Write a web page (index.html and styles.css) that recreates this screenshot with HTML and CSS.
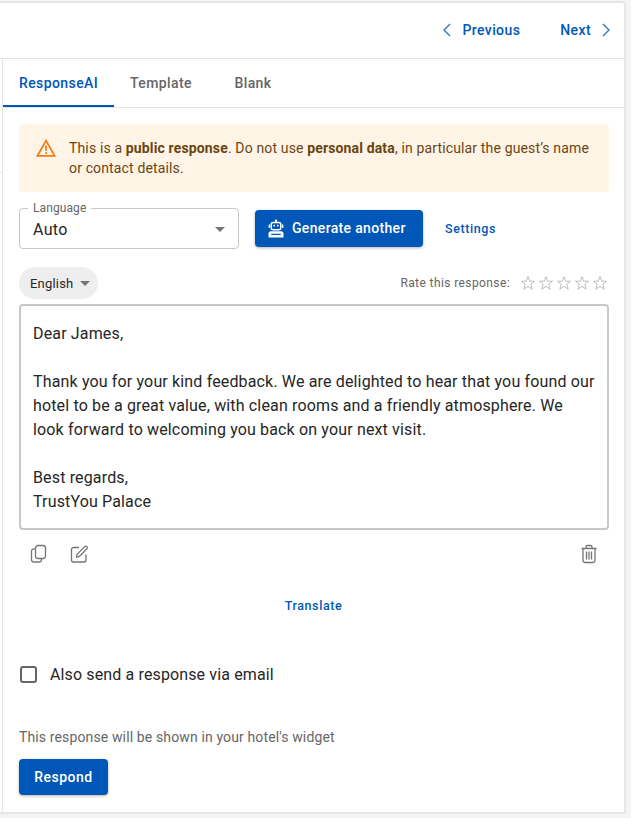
FILE: index.html
```html
<!DOCTYPE html>
<html lang="en">
<head>
<meta charset="utf-8">
<title>Respond</title>
<link rel="stylesheet" href="styles.css">
</head>
<body>
<main class="panel">
  <header class="pager">
    <a class="pager-link prev">
      <svg class="chev" viewBox="0 0 10 16"><path d="M8 2 2 8l6 6"/></svg>
      <span>Previous</span>
    </a>
    <a class="pager-link next">
      <span>Next</span>
      <svg class="chev" viewBox="0 0 10 16"><path d="m2 2 6 6-6 6"/></svg>
    </a>
  </header>
  <div class="body">
    <nav class="tabs">
      <a class="tab active">ResponseAI</a>
      <a class="tab">Template</a>
      <a class="tab">Blank</a>
    </nav>
    <section class="content">
      <div class="alert">
        <svg class="alert-icon" viewBox="0 0 20 18"><path class="alert-tri" d="M10 1.600 1.400 16.800h17.200Z"/><path class="alert-mark" d="M10 6.600v5.200M10 13.200v1.700"/></svg>
        <p>This is a <b>public response</b>. Do not use <b>personal data</b>, in particular the guest’s name or contact details.</p>
      </div>
      <div class="controls">
        <div class="select">
          <span class="select-label">Language</span>
          <span class="select-value">Auto</span>
          <i class="caret"></i>
        </div>
        <button class="btn gen">
          <svg class="robot" viewBox="0 0 20 20"><circle cx="10" cy="1.700" r="1.200" class="w"/><rect x="5.200" y="3.400" width="9.600" height="7.400" rx="2" class="rs"/><rect x="2.600" y="5.600" width="1.400" height="3.200" class="w"/><rect x="16" y="5.600" width="1.400" height="3.200" class="w"/><rect x="7.400" y="5.800" width="1.600" height="1.600" class="w"/><rect x="11" y="5.800" width="1.600" height="1.600" class="w"/><path d="M5 12.200h10a2.500 2.500 0 0 1 2.500 2.500v3.800h-15v-3.800A2.500 2.500 0 0 1 5 12.200Z" class="w"/><rect x="5.200" y="14.800" width="9.600" height="1.200" class="blue"/></svg>
          <span>Generate another</span>
        </button>
        <a class="link settings">Settings</a>
      </div>
      <div class="meta">
        <div class="chip"><span>English</span><i class="caret"></i></div>
        <div class="rate">
          <span>Rate this response:</span>
          <div class="stars">
            <svg class="star" viewBox="0 0 18 18"><path d="M9 1.800 11 7h5.400l-4.300 3.400 1.600 5.600L9 12.800 4.300 16l1.600-5.600L1.600 7H7Z"/></svg>
            <svg class="star" viewBox="0 0 18 18"><path d="M9 1.800 11 7h5.400l-4.300 3.400 1.600 5.600L9 12.800 4.300 16l1.600-5.600L1.600 7H7Z"/></svg>
            <svg class="star" viewBox="0 0 18 18"><path d="M9 1.800 11 7h5.400l-4.300 3.400 1.600 5.600L9 12.800 4.300 16l1.600-5.600L1.600 7H7Z"/></svg>
            <svg class="star" viewBox="0 0 18 18"><path d="M9 1.800 11 7h5.400l-4.300 3.400 1.600 5.600L9 12.800 4.300 16l1.600-5.600L1.600 7H7Z"/></svg>
            <svg class="star" viewBox="0 0 18 18"><path d="M9 1.800 11 7h5.400l-4.300 3.400 1.600 5.600L9 12.800 4.300 16l1.600-5.600L1.600 7H7Z"/></svg>
          </div>
        </div>
      </div>
      <div class="reply">
        <p>Dear James,</p>
        <p>Thank you for your kind feedback. We are delighted to hear that you found our hotel to be a great value, with clean rooms and a friendly atmosphere. We look forward to welcoming you back on your next visit.</p>
        <p>Best regards,<br>TrustYou Palace</p>
      </div>
      <div class="tools">
        <svg class="tool" viewBox="0 0 20 20"><rect x="6.500" y="1.500" width="10" height="13" rx="2.500"/><path d="M6.500 4.800H5A2.500 2.500 0 0 0 2.500 7.300v8.200A2.500 2.500 0 0 0 5 18h5a2.500 2.500 0 0 0 2.500-2.500v-1"/></svg>
        <svg class="tool" viewBox="0 0 20 20"><path d="M10 3.500H4.500a2 2 0 0 0-2 2V16a2 2 0 0 0 2 2H15a2 2 0 0 0 2-2v-5.500"/><path d="M7.500 13.200l.6-3L15.700 2.600a1.400 1.400 0 0 1 2 0l.2.2a1.400 1.400 0 0 1 0 2L10.400 12.500Z"/></svg>
        <svg class="tool trash" viewBox="0 0 20 20"><path d="M2.500 4.500h15M7 4.500V3a1.500 1.500 0 0 1 1.500-1.500h3A1.500 1.500 0 0 1 13 3v1.500M4 4.500V16a2.500 2.500 0 0 0 2.500 2.500h7A2.500 2.500 0 0 0 16 16V4.500M7.500 7.500v8M10 7.500v8M12.500 7.500v8"/></svg>
      </div>
      <div class="translate"><a class="link">Translate</a></div>
      <label class="check"><i class="box"></i><span>Also send a response via email</span></label>
      <p class="hint">This response will be shown in your hotel's widget</p>
      <button class="btn respond">Respond</button>
    </section>
  </div>
</main>
</body>
</html>
```
FILE: styles.css
```css
* { box-sizing: border-box; }
html, body { margin: 0; height: 100%; }
body {
  background: #f4f4f4;
  font-family: Roboto, "Liberation Sans", sans-serif;
  color: #262626;
  overflow: hidden;
}
p { margin: 0; }
a { cursor: pointer; }
.panel {
  position: relative;
  width: 626px;
  height: 813px;
  margin-top: 1px;
  background: #fff;
  border: solid #e6e6e6;
  border-width: 2px 2px 2px 0;
  border-top-right-radius: 4px;
  display: flex;
  flex-direction: column;
}
.panel::before {
  content: "";
  position: absolute;
  left: 0;
  top: 169px;
  width: 2px;
  height: 1px;
  background: #e4e4e4;
}
.pager {
  height: 56px;
  flex: none;
  display: flex;
  justify-content: flex-end;
  align-items: center;
  gap: 40px;
  padding: 0 13px 2px 0;
  border-bottom: 1px solid #e4e4e4;
}
.pager-link {
  display: flex;
  align-items: center;
  gap: 10px;
  color: #0057b8;
  font-size: 14px;
  font-weight: 500;
  letter-spacing: .4px;
}
.chev { width: 10px; height: 16px; fill: none; stroke: #2d70bd; stroke-width: 1.300; }
.body {
  flex: 1;
  border-left: 1px solid #e4e4e4;
  margin-left: 2px;
  display: flex;
  flex-direction: column;
  min-height: 0;
}
.tabs {
  height: 49px;
  flex: none;
  display: flex;
  border-bottom: 1px solid #e4e4e4;
}
.tab {
  min-width: 90px;
  height: 48px;
  padding: 2px 16px 0;
  display: flex;
  align-items: center;
  justify-content: center;
  font-size: 14px;
  font-weight: 500;
  letter-spacing: .4px;
  color: #666;
  border-bottom: 2px solid transparent;
}
.tab.active { color: #0057b8; border-bottom-color: #0057b8; }
.content { padding: 16px 15px 0 16px; display: flex; flex-direction: column; }
.alert {
  height: 68px;
  background: #fff4e5;
  border-radius: 4px;
  display: flex;
  padding: 14px 16px 0 17px;
  gap: 13px;
  color: #6a4513;
  font-size: 14px;
  line-height: 20px;
  letter-spacing: .145px;
}
.alert b { font-weight: 700; }
.alert-icon { width: 20px; height: 18px; flex: none; margin-top: 1px; fill: none; stroke: #f57c16; }
.alert-tri { stroke-width: 1.800; }
.alert-mark { stroke-width: 1.800; }
.controls { display: flex; align-items: center; margin-top: 16px; height: 41px; }
.select {
  position: relative;
  width: 220px;
  height: 41px;
  border: 1px solid #c8c8c8;
  border-radius: 4px;
  padding-left: 13px;
  display: flex;
  align-items: center;
}
.select-label {
  position: absolute;
  top: -8px;
  left: 8px;
  padding: 0 5px;
  background: #fff;
  font-size: 12px;
  line-height: 14px;
  letter-spacing: .1px;
  color: #666;
}
.select-value { font-size: 16px; letter-spacing: .3px; margin-top: 1px; }
.caret {
  width: 0;
  height: 0;
  border-left: 5px solid transparent;
  border-right: 5px solid transparent;
  border-top: 5px solid #757575;
}
.select .caret { position: absolute; right: 13px; top: 18px; }
.btn {
  border: 0;
  border-radius: 4px;
  background: #0057b8;
  color: #fff;
  font: 500 14px Roboto, "Liberation Sans", sans-serif;
  letter-spacing: .5px;
  box-shadow: 0 1px 3px rgba(0, 0, 0, .3);
}
.gen {
  margin-left: 16px;
  width: 168px;
  height: 37px;
  display: flex;
  align-items: center;
  gap: 6px;
  padding: 0 0 2px 11px;
  letter-spacing: .33px;
}
.robot { width: 20px; height: 20px; flex: none; margin-top: 2px; }
.robot .w { fill: #fff; }
.robot .rs { fill: none; stroke: #fff; stroke-width: 1.500; }
.robot .blue { fill: #0057b8; }
.link { color: #0057b8; font-size: 12.500px; font-weight: 500; letter-spacing: .6px; }
.settings { margin-left: 22px; margin-top: -1px; }
.meta { display: flex; justify-content: space-between; align-items: center; margin-top: 18px; height: 32px; padding-right: 1px; }
.chip {
  width: 79px;
  height: 32px;
  border-radius: 16px;
  background: #eee;
  display: flex;
  align-items: center;
  gap: 7px;
  padding-left: 11px;
  font-size: 13px;
  letter-spacing: .2px;
}
.rate { display: flex; align-items: center; gap: 10px; font-size: 12px; letter-spacing: .4px; color: #666; }
.stars { display: flex; gap: 2px; }
.star { width: 16px; height: 16px; fill: none; stroke: #bdbdbd; stroke-width: 1.100; }
.reply {
  margin-top: 5px;
  height: 226px;
  border: 2px solid #c8c8c8;
  border-radius: 4px;
  padding: 16px 12px 0;
  font-size: 16px;
  line-height: 24px;
  letter-spacing: .15px;
  display: flex;
  flex-direction: column;
  gap: 24px;
}
.tools { display: flex; align-items: center; gap: 20px; margin-top: 14px; padding: 0 10px; height: 20px; }
.tool { width: 20px; height: 20px; fill: none; stroke: #757575; stroke-width: 1.300; }
.trash { margin-left: auto; }
.translate { text-align: center; margin-top: 33px; line-height: 16px; margin-right: 1px; }
.check { display: flex; align-items: center; gap: 13px; margin-top: 48px; height: 24px; padding-left: 1px; font-size: 16px; letter-spacing: .13px; }
.box { width: 17px; height: 17px; border: 2px solid #666; border-radius: 3px; }
.hint { margin-top: 41px; font-size: 14px; line-height: 20px; color: #666; letter-spacing: .13px; }
.respond { margin-top: 12px; width: 89px; height: 36px; }
```
